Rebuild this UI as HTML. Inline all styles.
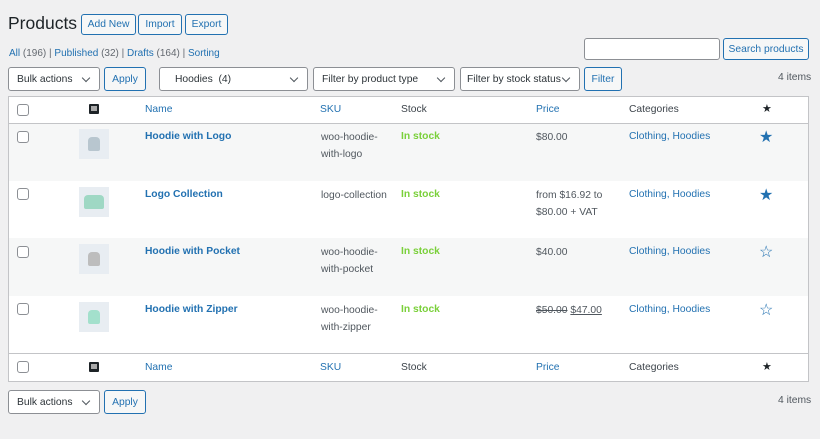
<!DOCTYPE html>
<html><head><style>
*{box-sizing:border-box;margin:0;padding:0}
body{width:820px;height:439px;background:#f0f0f1;font-family:"Liberation Sans",sans-serif;font-size:10.3px;color:#3c434a;position:relative;overflow:hidden}
.a{position:absolute;white-space:nowrap}
.btn{position:absolute;border:1px solid #2271b1;color:#2271b1;background:#f6f7f7;border-radius:3px;font-size:10.3px;display:flex;align-items:center;justify-content:center}
.sel{position:absolute;border:1px solid #8c8f94;background:#fff;border-radius:3px;font-size:10.3px;color:#2c3338;display:flex;align-items:center;padding-left:8px}
.sel:after{content:"";position:absolute;right:10px;top:7px;width:5px;height:5px;border-right:1.5px solid #50575e;border-bottom:1.5px solid #50575e;transform:rotate(45deg)}
.link{color:#2271b1}
.cb{position:absolute;left:17px;width:12px;height:12px;border:1px solid #8c8f94;border-radius:3px;background:#fff}
.row{position:absolute;left:9px;width:799px}
.th{position:absolute;left:79px;width:30px;height:30px;background:#e8edf2}
.th i{position:absolute;left:9px;top:8px;width:12px;height:14px;border-radius:4px 4px 2px 2px}
.nm{position:absolute;left:145px;font-weight:bold;color:#2271b1;font-size:10.3px}
.sku{position:absolute;left:321px;line-height:17px;color:#50575e}
.st{position:absolute;left:401px;color:#7ad03a;font-weight:bold}
.pr{position:absolute;left:536px;line-height:17px;color:#50575e}
.cat{position:absolute;left:629px;color:#2271b1}
.star{position:absolute;left:759px}
</style></head><body>
<div class="a" style="left:8px;top:13px;font-size:17.5px;color:#1d2327">Products</div>
<div class="btn" style="left:81px;top:14px;width:55px;height:21px">Add New</div>
<div class="btn" style="left:138px;top:14px;width:44px;height:21px">Import</div>
<div class="btn" style="left:185px;top:14px;width:43px;height:21px">Export</div>
<div class="a" style="left:9px;top:48px;font-size:10px;color:#646970"><span class="link">All</span> (196) | <span class="link">Published</span> (32) | <span class="link">Drafts</span> (164) | <span class="link">Sorting</span></div>
<div class="a" style="left:584px;top:38px;width:136px;height:22px;background:#fff;border:1px solid #8c8f94;border-radius:3px"></div>
<div class="btn" style="left:723px;top:38px;width:86px;height:22px">Search products</div>
<div class="sel" style="left:8px;top:67px;width:92px;height:24px">Bulk actions</div>
<div class="btn" style="left:104px;top:67px;width:42px;height:24px">Apply</div>
<div class="sel" style="left:159px;top:67px;width:149px;height:24px;padding-left:15px">Hoodies&nbsp; (4)</div>
<div class="sel" style="left:313px;top:67px;width:142px;height:24px">Filter by product type</div>
<div class="sel" style="left:460px;top:67px;width:120px;height:24px;padding-left:6px">Filter by stock status</div>
<div class="btn" style="left:584px;top:67px;width:38px;height:24px">Filter</div>
<div class="a" style="left:778px;top:72px;color:#50575e">4 items</div>

<div class="a" style="left:8px;top:96px;width:801px;height:286px;border:1px solid #c3c4c7;background:#fff"></div>
<div class="row" style="top:123px;height:1px;background:#c3c4c7"></div>
<div class="row" style="top:124px;height:57px;background:#f6f7f7"></div>
<div class="row" style="top:238px;height:58px;background:#f6f7f7"></div>
<div class="row" style="top:353px;height:1px;background:#c3c4c7"></div>

<!-- header -->
<div class="cb" style="top:104px"></div>
<div class="a" style="left:89px;top:104px;width:10px;height:10px;background:#1d2327;border-radius:1px"><div style="position:absolute;left:2px;top:2px;width:6px;height:5px;background:#aaa"></div></div>
<div class="a link" style="left:145px;top:104px">Name</div>
<div class="a link" style="left:320px;top:104px">SKU</div>
<div class="a" style="left:401px;top:104px">Stock</div>
<div class="a link" style="left:536px;top:104px">Price</div>
<div class="a" style="left:629px;top:104px">Categories</div>
<div class="a" style="left:762px;top:102px;font-size:11px;color:#1d2327">★</div>

<!-- row1 -->
<div class="cb" style="top:131px"></div><div class="th" style="top:129px"><i style="background:#b8c6cf"></i></div>
<div class="a nm" style="top:131px">Hoodie with Logo</div>
<div class="a sku" style="top:129px">woo-hoodie-<br>with-logo</div>
<div class="a st" style="top:131px">In stock</div>
<div class="a pr" style="top:129px">$80.00</div>
<div class="a cat" style="top:131px">Clothing, Hoodies</div>
<div class="a star" style="top:127px;font-size:16px;color:#2271b1">★</div>
<!-- row2 -->
<div class="cb" style="top:188px"></div><div class="th" style="top:187px"><i style="background:#9fd8c4;left:5px;width:20px"></i></div>
<div class="a nm" style="top:189px">Logo Collection</div>
<div class="a sku" style="top:187px">logo-collection</div>
<div class="a st" style="top:189px">In stock</div>
<div class="a pr" style="top:187px">from $16.92 to<br>$80.00 + VAT</div>
<div class="a cat" style="top:189px">Clothing, Hoodies</div>
<div class="a star" style="top:185px;font-size:16px;color:#2271b1">★</div>
<!-- row3 -->
<div class="cb" style="top:246px"></div><div class="th" style="top:244px"><i style="background:#bdbdbd"></i></div>
<div class="a nm" style="top:246px">Hoodie with Pocket</div>
<div class="a sku" style="top:244px">woo-hoodie-<br>with-pocket</div>
<div class="a st" style="top:246px">In stock</div>
<div class="a pr" style="top:244px">$40.00</div>
<div class="a cat" style="top:246px">Clothing, Hoodies</div>
<div class="a star" style="top:242px;font-size:16px;color:#2271b1">☆</div>
<!-- row4 -->
<div class="cb" style="top:303px"></div><div class="th" style="top:302px"><i style="background:#a3e0cc"></i></div>
<div class="a nm" style="top:304px">Hoodie with Zipper</div>
<div class="a sku" style="top:302px">woo-hoodie-<br>with-zipper</div>
<div class="a st" style="top:304px">In stock</div>
<div class="a pr" style="top:302px"><s>$50.00</s> <u>$47.00</u></div>
<div class="a cat" style="top:304px">Clothing, Hoodies</div>
<div class="a star" style="top:300px;font-size:16px;color:#2271b1">☆</div>

<!-- footer -->
<div class="cb" style="top:361px"></div>
<div class="a" style="left:89px;top:362px;width:10px;height:10px;background:#1d2327;border-radius:1px"><div style="position:absolute;left:2px;top:2px;width:6px;height:5px;background:#aaa"></div></div>
<div class="a link" style="left:145px;top:362px">Name</div>
<div class="a link" style="left:320px;top:362px">SKU</div>
<div class="a" style="left:401px;top:362px">Stock</div>
<div class="a link" style="left:536px;top:362px">Price</div>
<div class="a" style="left:629px;top:362px">Categories</div>
<div class="a" style="left:762px;top:360px;font-size:11px;color:#1d2327">★</div>

<div class="sel" style="left:8px;top:390px;width:92px;height:24px">Bulk actions</div>
<div class="btn" style="left:104px;top:390px;width:42px;height:24px">Apply</div>
<div class="a" style="left:778px;top:395px;color:#50575e">4 items</div>
</body></html>
